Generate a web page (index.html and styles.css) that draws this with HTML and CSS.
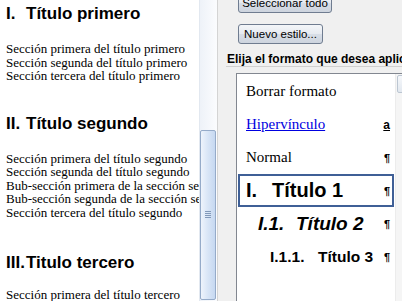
FILE: index.html
```html
<!DOCTYPE html>
<html lang="es">
<head>
    <meta charset="UTF-8">
    <title>Estilos</title>
    <link rel="stylesheet" href="styles.css">
</head>
<body>
    <div class="window">
        <!-- Document -->
        <div class="document">
            <h2 class="doc-title first"><span class="num">I.</span>Título primero</h2>
            <div class="doc-text">
                <div>Sección primera del título primero</div>
                <div>Sección segunda del título primero</div>
                <div>Sección tercera del título primero</div>
            </div>
            <h2 class="doc-title"><span class="num">II.</span>Título segundo</h2>
            <div class="doc-text">
                <div>Sección primera del título segundo</div>
                <div>Sección segunda del título segundo</div>
                <div>Bub-sección primera de la sección segunda</div>
                <div>Bub-sección segunda de la sección segunda</div>
                <div>Sección tercera del título segundo</div>
            </div>
            <h2 class="doc-title third"><span class="num">III.</span>Titulo tercero</h2>
            <div class="doc-text last">
                <div>Sección primera del título tercero</div>
            </div>
        </div>

        <div class="scrollbar">
            <div class="thumb"><div class="grip"></div></div>
        </div>

        <!-- Styles panel -->
        <div class="panel">
            <button class="btn btn-select">Seleccionar todo</button>
            <button class="btn btn-new">Nuevo estilo...</button>
            <div class="panel-label">Elija el formato que desea aplicar</div>
            <div class="style-list">
                <div class="style-items">
                    <div class="style-row"><span class="st-plain">Borrar formato</span></div>
                    <div class="style-row"><span class="st-plain st-link">Hipervínculo</span><span class="mark mark-a">a</span></div>
                    <div class="style-row"><span class="st-plain">Normal</span><span class="mark">¶</span></div>
                    <div class="style-row selected"><span class="st-h1"><span class="num">I.</span>Título 1</span><span class="mark">¶</span></div>
                    <div class="style-row"><span class="st-h2"><span class="num">I.1.</span>Título 2</span><span class="mark">¶</span></div>
                    <div class="style-row"><span class="st-h3"><span class="num">I.1.1.</span>Título 3</span><span class="mark">¶</span></div>
                </div>
                <div class="list-scroll"><div class="arrow-btn"></div></div>
            </div>
        </div>
    </div>
</body>
</html>
```

FILE: styles.css
```css
html, body {
    margin: 0;
    padding: 0;
}
body {
    width: 402px;
    height: 301px;
    overflow: hidden;
    background-color: #fff;
}
.window {
    display: flex;
    height: 301px;
}

/* document */
.document {
    width: 199px;
    flex-shrink: 0;
    box-sizing: border-box;
    padding-left: 6px;
    overflow: hidden;
    white-space: nowrap;
    background-color: #fff;
    color: #000;
}
.doc-title {
    font-family: "Liberation Sans", Arial, sans-serif;
    font-size: 17px;
    font-weight: bold;
    line-height: 20px;
    margin: 31px 0 0 0;
}
.doc-title.first {
    margin-top: 4px;
}
.doc-title.third {
    margin-top: 34px;
}
.doc-title .num {
    display: inline-block;
    min-width: 20px;
}
.doc-text {
    font-family: "Liberation Serif", "Times New Roman", serif;
    font-size: 13px;
    line-height: 13.5px;
    margin-top: 18px;
}
.doc-text.last {
    margin-top: 15px;
}

/* scrollbar */
.scrollbar {
    width: 18px;
    flex-shrink: 0;
    box-sizing: border-box;
    border-left: 1px solid #e2e8f0;
    background: linear-gradient(to right, #eef2f8, #fbfcfe);
    display: flex;
    flex-direction: column;
    padding-top: 130px;
}
.thumb {
    flex: 1;
    margin: 0 1px 1px 0;
    border: 1px solid #95abc9;
    border-radius: 2px;
    background: linear-gradient(to right, #eef4fc, #d8e5f6 50%, #c6d8f1);
    display: flex;
    align-items: center;
    justify-content: center;
}
.grip {
    width: 6px;
    height: 8px;
    background: repeating-linear-gradient(to bottom, #8299b9 0 1px, transparent 1px 2px);
}

/* panel */
.panel {
    flex: 1;
    min-width: 0;
    overflow: hidden;
    background-color: #f0f0f0;
    border-left: 1px solid #d4d4d4;
    padding-left: 8px;
}
.btn {
    display: block;
    margin-left: 12px;
    height: 20px;
    box-sizing: border-box;
    padding: 0;
    border: 1px solid #6f7c90;
    border-radius: 3px;
    background: linear-gradient(#f4f6f9, #e6eaf0 50%, #d8dee7 51%, #cdd4de);
    font-family: "Liberation Sans", Arial, sans-serif;
    font-size: 11.5px;
    line-height: 18px;
    color: #000;
    text-align: center;
}
.btn-select {
    width: 94px;
    margin-top: -7px;
}
.btn-new {
    width: 85px;
    margin-top: 11px;
}
.panel-label {
    margin-top: 7px;
    padding: 1px 0 0 1px;
    line-height: 14px;
    font-family: "Liberation Sans", Arial, sans-serif;
    font-size: 12px;
    font-weight: bold;
    white-space: nowrap;
    border-bottom: 1px solid #d0d0d0;
    color: #000;
}
.style-list {
    display: flex;
    margin: 6px -12px 0 10px;
    height: 240px;
    background-color: #fff;
    border: 1px solid #828790;
}
.style-items {
    flex: 1;
    padding-top: 1px;
}
.style-row {
    display: flex;
    align-items: center;
    justify-content: space-between;
    height: 33px;
    box-sizing: border-box;
    margin: 0 1px;
    border: 2px solid transparent;
    padding: 0 2px 0 6px;
    white-space: nowrap;
    color: #000;
}
.style-row.selected {
    border-color: #3f5f96;
}
.st-plain {
    font-family: "Liberation Serif", "Times New Roman", serif;
    font-size: 15px;
}
.st-link {
    color: #0000e0;
    text-decoration: underline;
}
.st-h1, .st-h2, .st-h3 {
    font-family: "Liberation Sans", Arial, sans-serif;
    font-weight: bold;
}
.st-h1 {
    font-size: 20px;
}
.st-h1 .num {
    display: inline-block;
    width: 26px;
}
.st-h2 {
    font-size: 19px;
    font-style: italic;
    margin-left: 12px;
}
.st-h2 .num {
    display: inline-block;
    width: 38px;
}
.st-h3 {
    font-size: 15.5px;
    margin-left: 24px;
}
.st-h3 .num {
    display: inline-block;
    width: 48px;
}
.mark {
    font-family: "Liberation Sans", Arial, sans-serif;
    font-size: 11px;
    font-weight: bold;
    color: #000;
}
.mark-a {
    font-size: 12px;
    text-decoration: underline;
}
.list-scroll {
    width: 17px;
    background-color: #f5f5f5;
    border-left: 1px solid #ececec;
}
.arrow-btn {
    height: 16px;
    margin: 1px;
    border: 1px solid #bcc6d2;
    border-radius: 2px;
    background: linear-gradient(#f6f8fb, #e2e8ef);
}
```
